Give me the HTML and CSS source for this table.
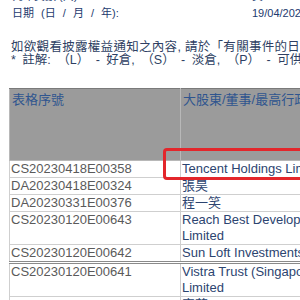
FILE: index.html
```html
<!DOCTYPE html>
<html lang="zh-Hant">
<head>
<meta charset="utf-8">
<title>披露權益</title>
<link rel="stylesheet" href="styles.css">
</head>
<body>
<div class="page">
  <div class="meta">
    <div class="meta-left">
      <div>列印頁數 (共):</div>
      <div class="date-label">日期 (日 / 月 / 年):</div>
    </div>
    <div class="meta-right">
      <div>頁 - 1/1</div>
      <div>19/04/2023</div>
    </div>
  </div>
  <div class="notes">
    <p class="intro">如欲觀看披露權益通知之內容, 請於「有關事件的日期」一欄內點擊有關日期。</p>
    <p class="legend">* 註解: （L） - 好倉, （S） - 淡倉, （P） - 可供借出的股份</p>
  </div>
  <table class="grid">
    <thead>
      <tr>
        <th class="col-id"><div class="head-cell">表格序號</div></th>
        <th class="col-name"><div class="head-cell">大股東/董事/最高行政人員名稱</div></th>
      </tr>
    </thead>
    <tbody>
      <tr><td class="id">CS20230418E00358</td><td class="name">Tencent Holdings Limited</td></tr>
      <tr><td class="id">DA20230418E00324</td><td class="name">張昊</td></tr>
      <tr><td class="id">DA20230331E00376</td><td class="name">程一笑</td></tr>
      <tr><td class="id">CS20230120E00643</td><td class="name">Reach Best Developments Limited</td></tr>
      <tr class="strong-below"><td class="id">CS20230120E00642</td><td class="name">Sun Loft Investments Limited</td></tr>
      <tr><td class="id">CS20230120E00641</td><td class="name">Vistra Trust (Singapore) Pte. Limited</td></tr>
      <tr><td class="id">DA20230120E00645</td><td class="name">宿華</td></tr>
    </tbody>
  </table>
  <div class="mark"></div>
</div>
</body>
</html>
```
FILE: styles.css
```css
html, body {
  margin: 0;
  padding: 0;
  overflow: hidden;
  background: #ffffff;
}

body {
  font-family: "Liberation Sans", "Noto Sans CJK TC", sans-serif;
}

.page {
  position: relative;
  padding-left: 9px;
  margin-top: -12px;
  width: 600px;
}

.meta {
  display: flex;
  font-size: 11px;
  line-height: 17px;
  color: #1d3a6e;
  padding-left: 3px;
}

.meta-left {
  width: 240px;
}

.date-label {
  word-spacing: 4px;
}

.notes {
  margin-top: 19px;
  padding-left: 2px;
  font-size: 12.5px;
  line-height: 13px;
  color: #2e3f63;
}

.notes p {
  margin: 0;
  white-space: nowrap;
}

.notes .intro {
  letter-spacing: 0.3px;
}

.notes .legend {
  word-spacing: 3px;
}

.grid {
  margin-top: 21px;
  border-collapse: collapse;
  font-size: 13px;
}

.grid th {
  background: #9b9b9b;
  color: #2f558f;
  font-weight: normal;
  text-align: left;
  vertical-align: top;
  padding: 3px 2px 0;
  border: 1px solid #b8b8b8;
  border-top-color: #7a7a7a;
  line-height: 16px;
}

.head-cell {
  height: 68px;
  white-space: nowrap;
}

.col-id {
  width: 166px;
}

.col-name {
  width: 187px;
}

.grid td {
  line-height: 16px;
  padding: 0 1px;
  border: 1px solid #cfcfcf;
  vertical-align: top;
}

.grid td.id {
  color: #5a5a5a;
}

.grid td.name {
  color: #2c4470;
}

.grid tr.strong-below td {
  border-bottom: 3px double #8a8a8a;
}

.mark {
  position: absolute;
  left: 163px;
  top: 160px;
  width: 170px;
  height: 32px;
  box-sizing: border-box;
  border: 3px solid #e3262b;
  border-radius: 4px;
}
```
